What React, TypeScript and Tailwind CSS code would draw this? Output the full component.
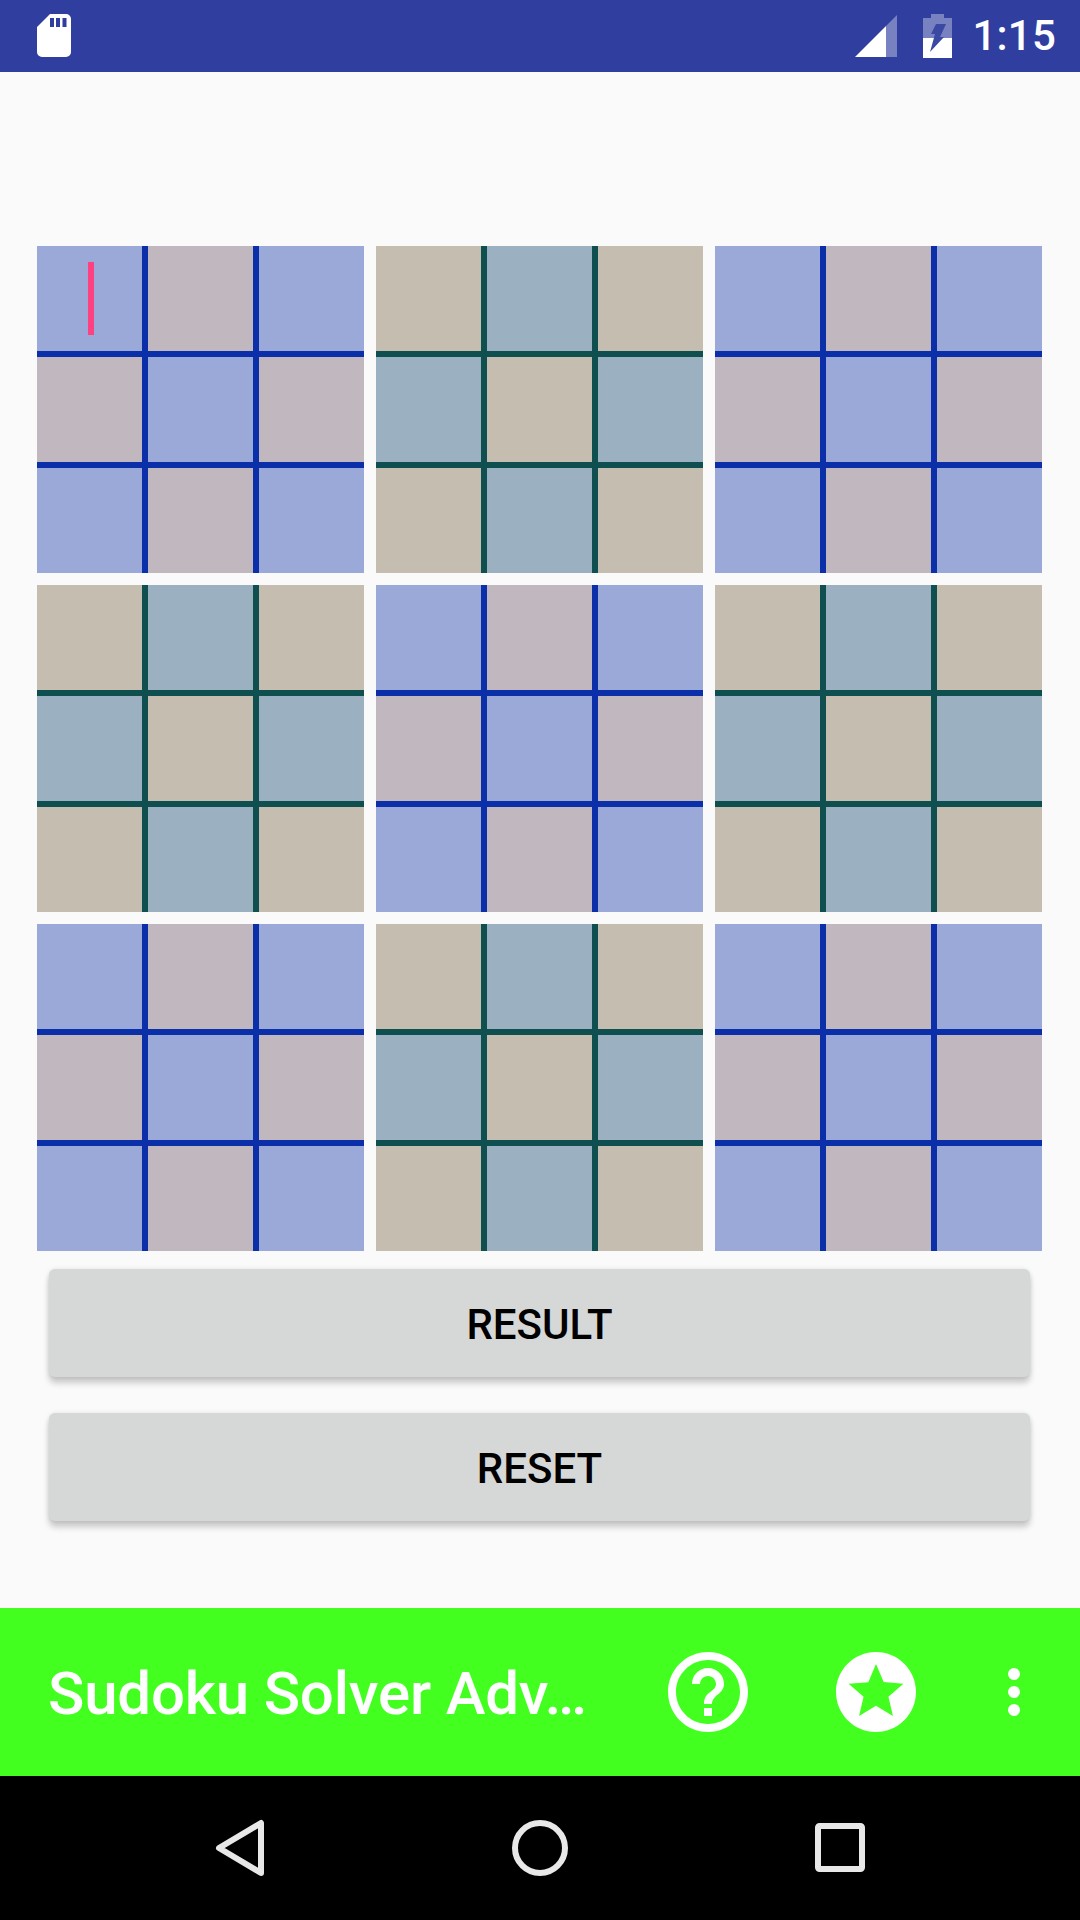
import React from "react";

const Block = ({ kind, cursor }: { kind: "blue" | "teal"; cursor?: boolean }) => {
  const blue = kind === "blue";
  const cells = [0, 1, 2, 3, 4, 5, 6, 7, 8];
  return (
    <div
      className={`grid grid-cols-[105px_105px_105px] grid-rows-[105px_105px_105px] gap-[6px] w-[327px] h-[327px] ${
        blue ? "bg-[#0b2fa8]" : "bg-[#0f4f4f]"
      }`}
    >
      {cells.map((i) => {
        const even = i % 2 === 0;
        const cls = blue
          ? even
            ? "bg-[#9ba9d9]"
            : "bg-[#c1b7be]"
          : even
          ? "bg-[#c4bdb0]"
          : "bg-[#9bb0c0]";
        return (
          <div key={i} className={`relative ${cls}`}>
            {cursor && i === 0 && (
              <div className="absolute left-[51px] top-[16px] w-[6px] h-[73px] bg-[#ff4081]" />
            )}
          </div>
        );
      })}
    </div>
  );
};

const AppButton = ({ label }: { label: string }) => (
  <button className="ml-[49px] w-[981px] h-[108px] pt-[2px] rounded-[6px] bg-[#d6d7d7] shadow-[0_6px_6px_rgba(0,0,0,0.2),0_0_4px_rgba(0,0,0,0.1)] flex items-center justify-center text-[42px] font-medium text-black font-['Roboto',sans-serif]">
    {label}
  </button>
);

export default function App() {
  const kinds: ("blue" | "teal")[] = ["blue", "teal", "blue", "teal", "blue", "teal", "blue", "teal", "blue"];
  return (
    <div className="w-[1080px] h-[1920px] flex flex-col bg-[#fafafa] overflow-hidden font-['Roboto',sans-serif]">
      <div className="h-[72px] shrink-0 bg-[#303f9f] flex items-center pl-[37px] pr-[24px] text-white">
        <svg width="34" height="43" viewBox="0 0 34 43" className="mt-[-1px]">
          <path
            fill="#fff"
            fillRule="evenodd"
            d="M13 0H29a5 5 0 0 1 5 5V38a5 5 0 0 1-5 5H5a5 5 0 0 1-5-5V13ZM13 4V13H17V4ZM19 4V13H23V4ZM25.500 4V13H29.500V4Z"
          />
        </svg>
        <div className="flex-1" />
        <svg width="42" height="42" viewBox="0 0 42 42">
          <path fill="#fff" fillOpacity="0.35" d="M42 0V42H31V11Z" />
          <path fill="#fff" d="M31 11V42H0Z" />
        </svg>
        <svg width="29" height="44" viewBox="0 0 29 44" className="ml-[26px]">
          <path fill="#fff" fillOpacity="0.35" d="M8 0H21V4H29V24H0V4H8Z" />
          <path fill="#fff" d="M0 24H29V44H0Z" />
          <path fill="#3b49a4" d="M13 10H23L17 23H21L7 38L12 20H8Z" />
        </svg>
        <div className="ml-[21px] text-[42px] font-medium leading-none tracking-[0.2px]">1:15</div>
      </div>

      <div className="flex-1 flex flex-col pt-[174px]">
        <div className="grid grid-cols-[327px_327px_327px] gap-[12px] pl-[37px]">
          {kinds.map((k, i) => (
            <Block key={i} kind={k} cursor={i === 0} />
          ))}
        </div>
        <div className="flex flex-col gap-[36px] mt-[18px]">
          <AppButton label="RESULT" />
          <AppButton label="RESET" />
        </div>
      </div>

      <div className="h-[168px] shrink-0 bg-[#43ff1f] flex items-center pl-[48px] text-white">
        <div className="w-[612px] pt-[4px] text-[60px] font-medium leading-none tracking-[-0.2px] whitespace-nowrap">Sudoku Solver Adv…</div>
        <svg width="96" height="96" viewBox="0 0 24 24" fill="#fff">
          <path d="M11 18h2v-2h-2v2zm1-16C6.480 2 2 6.480 2 12s4.480 10 10 10 10-4.480 10-10S17.520 2 12 2zm0 18c-4.410 0-8-3.590-8-8s3.590-8 8-8 8 3.590 8 8-3.590 8-8 8zm0-14c-2.210 0-4 1.790-4 4h2c0-1.100.9-2 2-2s2 .9 2 2c0 2-3 1.750-3 5h2c0-2.250 3-2.500 3-5 0-2.210-1.790-4-4-4z" />
        </svg>
        <svg width="96" height="96" viewBox="0 0 24 24" fill="#fff" className="ml-[72px]">
          <path d="M12 2C6.470 2 2 6.480 2 12s4.470 10 10 10 10-4.480 10-10S17.530 2 12 2zm4.240 16L12 15.450 7.770 18l1.120-4.810-3.730-3.230 4.920-.42L12 5l1.920 4.530 4.920.42-3.730 3.230L16.230 18z" />
        </svg>
        <div className="ml-[84px] flex flex-col gap-[6px]">
          <div className="w-[12px] h-[12px] rounded-full bg-white" />
          <div className="w-[12px] h-[12px] rounded-full bg-white" />
          <div className="w-[12px] h-[12px] rounded-full bg-white" />
        </div>
      </div>

      <div className="h-[144px] shrink-0 bg-black flex items-center">
        <svg width="1080" height="144" viewBox="0 0 1080 144" fill="none" stroke="#e8e8e8" strokeWidth="6">
          <path strokeLinejoin="round" d="M261 47V97L219 72Z" />
          <circle cx="540" cy="72" r="25" />
          <rect x="818" y="50" width="44" height="43" rx="1.500" />
        </svg>
      </div>
    </div>
  );
}
